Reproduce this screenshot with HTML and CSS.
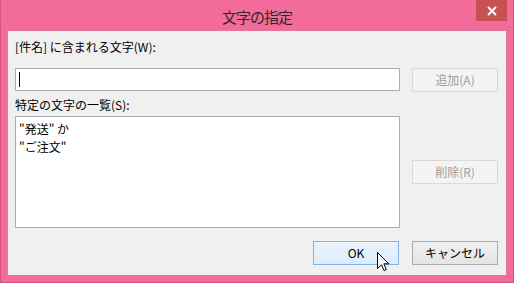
FILE: index.html
```html
<!DOCTYPE html>
<html lang="ja">
<head>
    <meta charset="UTF-8">
    <title>文字の指定</title>
    <link rel="stylesheet" href="styles.css">
</head>
<body>

<div class="window">
    <div class="titlebar">
        <span class="title">文字の指定</span>
        <div class="close-btn">
            <svg width="10" height="10" viewBox="0 0 10 10">
                <path d="M1 1 L9 9 M9 1 L1 9" stroke="#fff" stroke-width="2"/>
            </svg>
        </div>
    </div>

    <div class="content">
        <div class="label first">[件名] に含まれる文字(W):</div>
        <div class="row">
            <div class="textbox"><span class="caret"></span></div>
            <div class="btn disabled">追加(A)</div>
        </div>

        <div class="label second">特定の文字の一覧(S):</div>
        <div class="row">
            <div class="listbox">
                <div class="item">"発送" か</div>
                <div class="item">"ご注文"</div>
            </div>
            <div class="btn disabled delete">削除(R)</div>
        </div>

        <div class="footer">
            <div class="btn default">OK</div>
            <div class="btn">キャンセル</div>
        </div>
    </div>

    <svg class="pointer" width="13" height="20" viewBox="0 0 13 20">
        <path d="M0.5 0.5 L0.5 16.5 L4.5 12.8 L7 18.5 L9.3 17.5 L6.8 11.8 L11.8 11.8 Z" fill="#fff" stroke="#000" stroke-width="1" stroke-linejoin="miter"/>
    </svg>
</div>

</body>
</html>
```

FILE: styles.css
```css
body {
    margin: 0;
    padding: 0;
    font-family: "Noto Sans CJK JP", "Noto Sans", sans-serif;
    font-size: 12px;
    color: #000;
}
.window {
    position: relative;
    width: 514px;
    height: 283px;
    box-sizing: border-box;
    background-color: #f36b9b;
    border: 1px solid #d25582;
    border-top: none;
    display: flex;
    flex-direction: column;
}
.titlebar {
    height: 31px;
    padding-top: 2px;
    box-sizing: border-box;
    display: flex;
    align-items: center;
    justify-content: center;
}
.title {
    font-size: 15px;
    letter-spacing: -1px;
    line-height: 20px;
    color: #2a2a2a;
}
.close-btn {
    position: absolute;
    top: 0;
    right: 6px;
    width: 31px;
    height: 21px;
    background-color: #c75050;
    display: flex;
    align-items: center;
    justify-content: center;
}
.content {
    width: 498px;
    height: 244px;
    margin: 0 7px 7px 7px;
    box-sizing: border-box;
    padding: 0 8px 0 7px;
    background-color: #f0f0f0;
    box-shadow: 0 0 0 1px #e0779d;
}
.label {
    line-height: 16px;
    height: 16px;
}
.label.first {
    margin-top: 8px;
    margin-bottom: 13px;
}
.label.second {
    margin-top: 5px;
    margin-bottom: 3px;
}
.row {
    display: flex;
    gap: 12px;
    align-items: flex-start;
}
.textbox {
    width: 385px;
    height: 23px;
    box-sizing: border-box;
    background-color: #fff;
    border: 1px solid #abadb3;
    padding: 3px 0 0 3px;
}
.caret {
    display: block;
    width: 1px;
    height: 15px;
    background-color: #000;
}
.btn {
    width: 86px;
    height: 24px;
    box-sizing: border-box;
    border: 1px solid #acacac;
    background: linear-gradient(#f0f0f0, #e5e5e5);
    display: flex;
    align-items: center;
    justify-content: center;
    line-height: 16px;
}
.btn.disabled {
    background: #f4f4f4;
    border-color: #d9d9d9;
    color: #9d9d9d;
}
.btn.default {
    background: linear-gradient(#ecf4fc, #dcecfc);
    border-color: #7eb4ea;
}
.btn.delete {
    margin-top: 44px;
}
.listbox {
    width: 385px;
    height: 112px;
    box-sizing: border-box;
    background-color: #fff;
    border: 1px solid #abadb3;
    padding: 3px 0 0 3px;
}
.item {
    line-height: 18px;
}
.footer {
    display: flex;
    justify-content: flex-end;
    gap: 13px;
    margin-top: 13px;
}
.pointer {
    position: absolute;
    left: 376px;
    top: 252px;
}
```
